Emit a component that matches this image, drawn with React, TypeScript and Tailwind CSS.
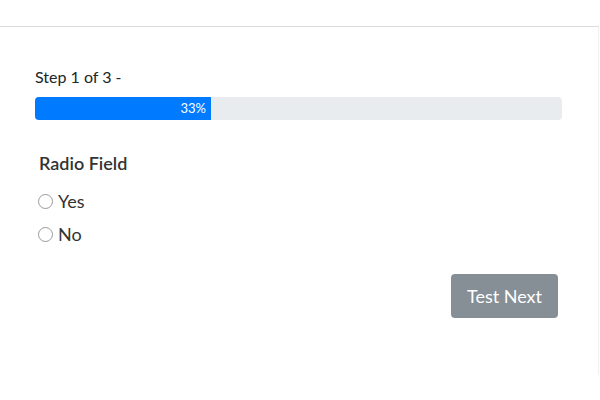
export default function App() {
  return (
    <div className="h-[400px] w-[600px] bg-white pt-[26px] font-['Segoe_UI','Lato',sans-serif] text-[#212529]">
      <div className="h-[349px] w-[599px] border-t border-r border-t-[#dcdcdc] border-r-[#f0f0f0] px-[35px] pt-[38px]">
        <p className="text-[16px] leading-[24px]">Step 1 of 3 -</p>
        <div className="mt-[8px] flex h-[23px] w-[527px] overflow-hidden rounded-[4px] bg-[#e9ecef]">
          <div className="flex w-[176px] items-center justify-end bg-[#007bff] pr-[5px] text-[13px] text-white">33%</div>
        </div>

        <div className="mt-[30px] pl-[4px]">
          <p className="text-[18px] font-semibold leading-[26px] text-[#333]">Radio Field</p>
          <div className="-ml-[1px] mt-[12px] flex flex-col gap-[7px]">
            {["Yes", "No"].map((o) => (
              <label key={o} className="flex items-center gap-[5px] text-[18px] leading-[26px] text-[#333]">
                <span className="h-[15px] w-[15px] rounded-full border border-[#9a9a9a] bg-white" />
                {o}
              </label>
            ))}
          </div>
        </div>

        <div className="mt-[27px] flex justify-end pr-[5px]">
          <button className="h-[44px] w-[107px] rounded-[4px] bg-[#868e96] text-[18px] text-white">Test Next</button>
        </div>
      </div>
    </div>
  );
}
